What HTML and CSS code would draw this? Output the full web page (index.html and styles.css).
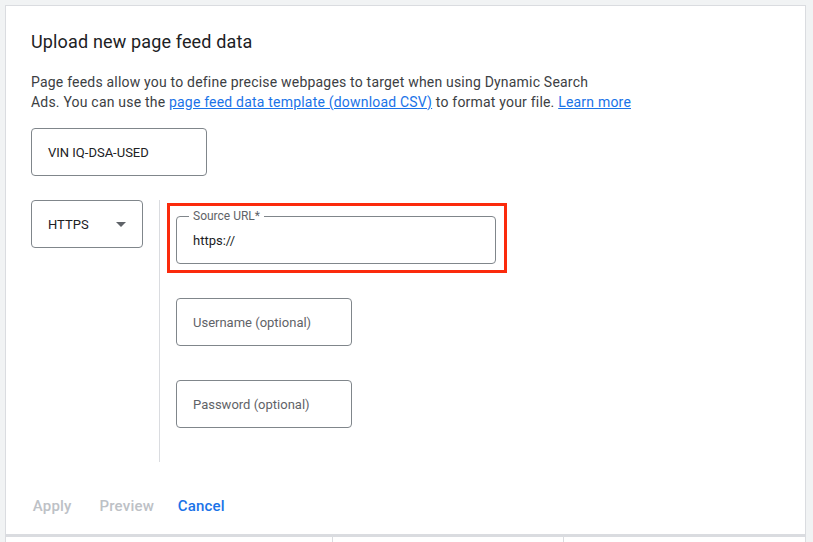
FILE: index.html
```html
<!DOCTYPE html>
<html lang="en">
<head>
<meta charset="utf-8">
<title>Upload new page feed data</title>
<link rel="stylesheet" href="styles.css">
</head>
<body>
<div class="page">
  <div class="card">
    <h1 class="title">Upload new page feed data</h1>
    <p class="desc">Page feeds allow you to define precise webpages to target when using Dynamic Search<br>Ads. You can use the <a href="#" class="link">page feed data template (download CSV)</a> to format your file. <a href="#" class="link">Learn more</a></p>
    <div class="field name-field"><span class="value">VIN IQ-DSA-USED</span></div>
    <div class="source-row">
      <div class="field select-field">
        <span class="value">HTTPS</span>
        <svg class="caret" width="10" height="5" viewBox="0 0 10 5"><path d="M0 0h10L5 5z" fill="#5f6368"/></svg>
      </div>
      <div class="fields-col">
        <div class="field-wrap">
          <div class="field outlined">
            <span class="float-label">Source URL*</span>
            <span class="value">https://</span>
            <div class="highlight"></div>
          </div>
        </div>
        <div class="field-wrap">
          <div class="field short"><span class="placeholder">Username (optional)</span></div>
        </div>
        <div class="field-wrap">
          <div class="field short"><span class="placeholder">Password (optional)</span></div>
        </div>
      </div>
    </div>
    <div class="actions">
      <button class="btn disabled">Apply</button>
      <button class="btn disabled">Preview</button>
      <button class="btn primary">Cancel</button>
    </div>
  </div>
  <div class="table-row">
    <div class="cell c1"></div>
    <div class="cell c2"></div>
    <div class="cell c3"></div>
  </div>
</div>
</body>
</html>
```
FILE: styles.css
```css
* { box-sizing: border-box; }
html, body { margin: 0; padding: 0; }
body {
  background: #f1f3f4;
  font-family: Roboto, "Liberation Sans", Arial, sans-serif;
  color: #202124;
  width: 813px;
  height: 542px;
  overflow: hidden;
}
.page {
  padding: 5px 7px 0 5px;
}
.card {
  background: #fff;
  border-top: 1px solid #dadce0;
  border-left: 1px solid #dadce0;
  border-right: 1px solid #dadce0;
  padding: 24px 24px 10px 25px;
  height: 529px;
}
.title {
  margin: 0;
  font-size: 18px;
  line-height: 24px;
  font-weight: 400;
  letter-spacing: 0.15px;
  color: #202124;
}
.desc {
  margin: 18px 0 0;
  font-size: 14px;
  line-height: 20px;
  letter-spacing: 0.2px;
  color: #3c4043;
}
.link { color: #1a73e8; text-decoration: underline; }
.field {
  border: 1px solid #80868b;
  border-radius: 4px;
  height: 48px;
  display: flex;
  align-items: center;
  padding: 0 16px;
  font-size: 13px;
  position: relative;
}
.name-field { width: 176px; margin-top: 16px; }
.value { color: #202124; }
.placeholder { color: #5f6368; }
.source-row { display: flex; margin-top: 24px; }
.select-field { width: 112px; justify-content: space-between; flex: none; }
.fields-col {
  margin-left: 16px;
  border-left: 1px solid #dadce0;
  padding: 16px 0 0 16px;
  height: 262px;
}
.field-wrap { height: 82px; }
.outlined { width: 320px; padding-top: 1px; }
.short { width: 176px; }
.float-label {
  position: absolute;
  top: -8px;
  left: 12px;
  padding: 0 4px;
  background: #fff;
  font-size: 12px;
  line-height: 14px;
  color: #5f6368;
}
.highlight {
  position: absolute;
  left: -10px;
  top: -14px;
  right: -12px;
  bottom: -10px;
  border: 3px solid #fb2a0c;
  pointer-events: none;
}
.actions { display: flex; margin: 26px 0 0 -16px; }
.btn {
  width: 74.5px;
  height: 36px;
  border: 0;
  background: none;
  padding: 0;
  font-family: Roboto, "Liberation Sans", Arial, sans-serif;
  font-size: 15px;
  font-weight: 500;
  letter-spacing: 0.2px;
  text-align: center;
}
.btn.disabled { color: #bdc1c6; }
.btn.primary { color: #1a73e8; }
.table-row {
  display: flex;
  border-top: 3px solid #dadce0;
  background: #fff;
  height: 20px;
  border-left: 1px solid #dadce0;
  border-right: 1px solid #dadce0;
}
.cell { height: 100%; }
.c1 { width: 327px; border-right: 1px solid #dadce0; }
.c2 { width: 231px; border-right: 1px solid #dadce0; }
.c3 { flex: 1; }
```
